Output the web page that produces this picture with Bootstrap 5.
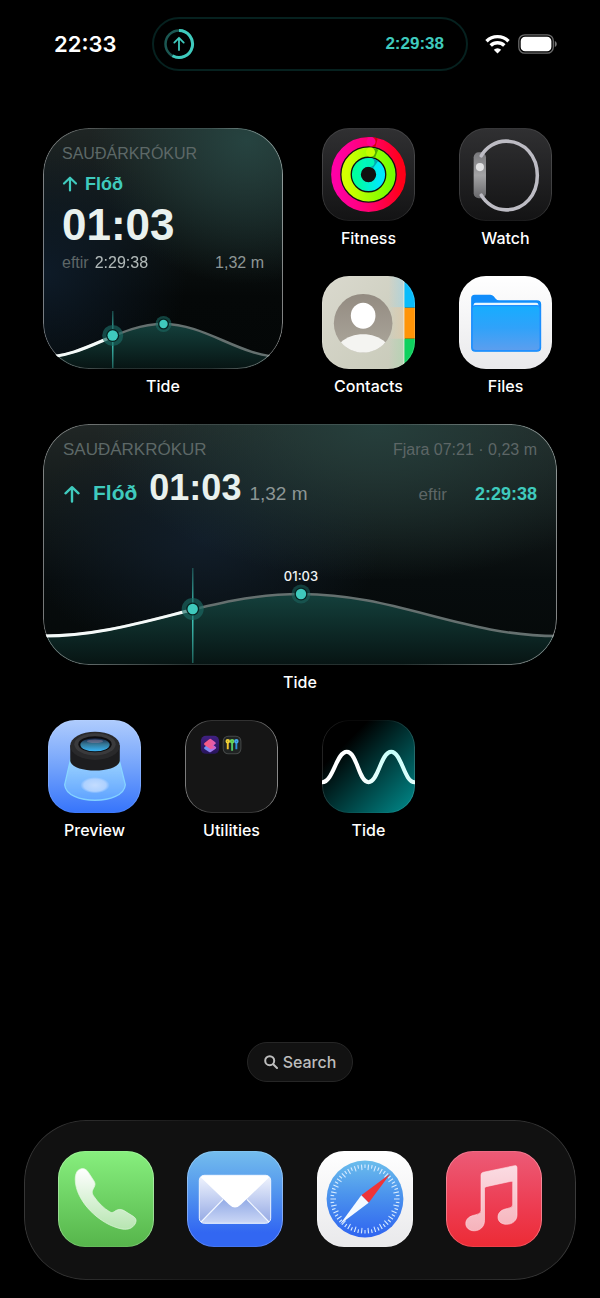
<!DOCTYPE html>
<html lang="is">
<head>
<meta charset="utf-8">
<meta name="viewport" content="width=device-width, initial-scale=1">
<title>Home Screen</title>
<link rel="stylesheet" href="https://cdn.jsdelivr.net/npm/bootstrap@5.3.0/dist/css/bootstrap.min.css">
<style>
  :root { --teal: #3fcabd; --ui: Inter, "Liberation Sans", sans-serif; --face: "Liberation Sans", Arial, sans-serif; }
  body { background: #000; color: #fff; font-family: var(--ui); }
  a { color: inherit; text-decoration: none; }
  svg { display: block; }

  .status { display: grid; grid-template-columns: 152fr 316fr 132fr; align-items: center; padding-top: 17px; }
  .clock { font-size: 22px; font-weight: 600; line-height: 28px; padding-left: 54px; }
  .island { height: 54px; border: 2px solid #06211f; border-radius: 27px; padding: 0 22px 0 9px; }
  .island time { font: 700 17px/20px var(--face); color: var(--teal); }
  .signals { gap: 8px; padding-left: 17px; }

  .springboard { display: grid; grid-template-columns: repeat(4, 1fr); grid-auto-rows: 148px; padding: 57px 26px 0; }
  .wide { grid-column: span 2; grid-row: span 2; }
  .full { grid-column: span 4; grid-row: span 2; }
  .app-label { font-size: 16px; font-weight: 500; line-height: 20px; margin-top: 7px; }
  .tile svg { width: 93px; height: 93px; border-radius: 27px; }
  .rim { position: relative; }
  .rim::after { content: ""; position: absolute; inset: 0; border-radius: inherit; padding: 1px; pointer-events: none;
    background: linear-gradient(90deg, rgba(255,255,255,.45), rgba(255,255,255,.12) 30%, rgba(255,255,255,.12) 70%, rgba(255,255,255,.5));
    -webkit-mask: linear-gradient(#000 0 0) content-box, linear-gradient(#000 0 0); -webkit-mask-composite: xor; mask-composite: exclude; }
  .tile .rim { border-radius: 27px; }
  .soft::after { opacity: .3; }

  .widget { margin: 0 17px; height: 241px; border-radius: 46px; overflow: hidden; font-family: var(--face); align-self: stretch; }
  .widget.small-face { background:
    radial-gradient(ellipse 65% 60% at 85% 5%, #264340, rgba(26,48,46,0)),
    radial-gradient(ellipse 60% 55% at 0 60%, #0e1b28, rgba(14,27,40,0)),
    linear-gradient(#1f2524, #101717 35%, #050808 70%, #040707); }
  .widget.large-face { background:
    radial-gradient(ellipse 55% 65% at 65% 0, #263f3c, rgba(26,46,44,0)),
    radial-gradient(ellipse 35% 50% at 31% 48%, #111d29, rgba(14,25,36,0)),
    linear-gradient(#202625, #121919 35%, #070c0d 65%, #050909); }
  .widget svg.tide { width: 100%; height: auto; margin-top: auto; }
  .s-body { padding: 16px 19px 0; }
  .s-body .phase { gap: 7px; margin-top: 10px; }
  .s-body .until { gap: 6px; }
  .l-body { padding: 16px 20px 0; }
  .place { color: #5d6867; line-height: 20px; }
  .teal { color: var(--teal); }
  .ink { color: #e9f1ee; }
  .mute { color: #5d6666; }
  .mid { color: #8d9695; }
  .t16 { font-size: 16px; line-height: 20px; }
  .t17 { font-size: 17px; line-height: 20px; }
  .t18 { font-size: 18px; line-height: 20px; }
  .t19 { font-size: 19px; line-height: 20px; }
  .t21 { font-size: 21px; line-height: 20px; }
  .hour-s { font-size: 44px; line-height: 44px; margin: 9px 0 6px; }
  .hour-l { font-size: 36px; line-height: 40px; }

  .finder { width: 106px; height: 40px; border: 1px solid #262626; border-radius: 20px; background: #121212; color: #bdbdbd; font-size: 16px; font-weight: 500; gap: 5px; margin: 0 auto 38px; }
  .dock { display: grid; grid-template-columns: repeat(4, 1fr); justify-items: center; margin: 0 24px 18px; padding: 31px 17px 33px; background: #111; border-radius: 62px; }
  .dock::after { opacity: .35; }
  .dock svg { width: 96px; height: 96px; border-radius: 27px; }
  .dock a { border-radius: 27px; }
  .dock a::after { opacity: .7; }
</style>
</head>
<body>
<div class="min-vh-100 d-flex flex-column">

  <header class="status">
    <time class="clock">22:33</time>
    <div class="island d-flex align-items-center justify-content-between">
      <svg width="32" height="32" viewBox="0 0 32 32" fill="none" stroke="#3fcabd">
        <circle cx="16" cy="16" r="13.5" stroke="#1b5752" stroke-width="2.5"/>
        <path d="M16 2.500A13.500 13.500 0 1 1 9.500 27.800" stroke-width="3"/>
        <path d="M16 22V10M11.300 14.600L16 9.800l4.700 4.800" stroke-width="1.800" stroke-linecap="round" stroke-linejoin="round"/>
      </svg>
      <time>2:29:38</time>
    </div>
    <div class="signals d-flex align-items-center">
      <svg width="25" height="20" viewBox="0 0 25 20" fill="none" stroke="#fff" stroke-width="3.400">
        <path d="M1.500 7.200a15.600 15.600 0 0 1 22 0"/><path d="M5.700 11.500a9.600 9.600 0 0 1 13.600 0"/>
        <path d="M12.500 19.500L8.800 15.700a5.300 5.300 0 0 1 7.400 0z" fill="#fff" stroke="none"/>
      </svg>
      <svg width="40" height="20" viewBox="0 0 40 20">
        <rect x=".8" y=".8" width="34.500" height="18.400" rx="6" fill="none" stroke="#6b6b6b" stroke-width="1.300"/>
        <rect x="2.700" y="2.700" width="30.700" height="14.600" rx="4.400" fill="#fff"/>
        <path d="M36.800 7v6c2.600-1 2.600-5 0-6z" fill="#777"/>
      </svg>
    </div>
  </header>

  <main class="springboard">
    <a href="#tide" class="wide d-flex flex-column align-items-center">
      <div class="widget small-face rim d-flex flex-column">
        <div class="s-body">
          <div class="place t16">SAUÐÁRKRÓKUR</div>
          <div class="phase teal t18 fw-bold d-flex align-items-center">
            <svg width="16" height="16" viewBox="0 0 16 16" fill="none" stroke="currentColor" stroke-width="2.200" stroke-linecap="round" stroke-linejoin="round"><path d="M8 14.500V2M2 7.500L8 1.700l6 5.800"/></svg>
            Flóð
          </div>
          <div class="ink hour-s fw-bold">01:03</div>
          <div class="until t16 d-flex"><span class="mute">eftir</span><span class="ink opacity-75">2:29:38</span><span class="mid ms-auto">1,32 m</span></div>
        </div>
        <svg class="tide" viewBox="0 0 240 60">
          <defs>
            <linearGradient id="sea" x1="0" y1="0" x2="0" y2="1"><stop stop-color="#14403c"/><stop offset="1" stop-color="#071413"/></linearGradient>
            <linearGradient id="now" x1="0" y1="0" x2="0" y2="1"><stop stop-color="#3fcabd" stop-opacity=".3"/><stop offset=".5" stop-color="#3fcabd"/><stop offset="1" stop-color="#3fcabd" stop-opacity=".4"/></linearGradient>
            <clipPath id="past"><path d="M0 0h70v60H0z"/></clipPath>
          </defs>
          <path d="M0 48C44 48 76 15 120 15S196 48 240 48V60H0z" fill="url(#sea)"/>
          <path d="M0 48C44 48 76 15 120 15S196 48 240 48" fill="none" stroke="#65706f" stroke-width="2.500"/>
          <path d="M0 48C44 48 76 15 120 15" clip-path="url(#past)" fill="none" stroke="#f5faf9" stroke-width="3"/>
          <path d="M69 2h1.500v57H69z" fill="url(#now)"/>
          <circle cx="69.700" cy="26.500" r="10.500" fill="#1c6a64" opacity=".65"/><circle cx="69.700" cy="26.500" r="6.500" fill="#062320"/><circle cx="69.700" cy="26.500" r="5.200" fill="#3fcabd"/>
          <circle cx="120.500" cy="15" r="8" fill="#1c6a64" opacity=".6"/><circle cx="120.500" cy="15" r="5.500" fill="#062320"/><circle cx="120.500" cy="15" r="4.200" fill="#3fcabd"/>
        </svg>
      </div>
      <span class="app-label">Tide</span>
    </a>

    <a href="#fitness" class="tile d-flex flex-column align-items-center">
      <div class="rim soft"><svg viewBox="0 0 92 92" fill="none">
        <defs>
          <linearGradient id="dark" x1="0" y1="0" x2="0" y2="1"><stop stop-color="#303032"/><stop offset="1" stop-color="#131314"/></linearGradient>
          <linearGradient id="r1"><stop stop-color="#ff00a6"/><stop offset=".45" stop-color="#ff0078"/><stop offset="1" stop-color="#ff0018"/></linearGradient>
          <linearGradient id="r2"><stop stop-color="#d5ff00"/><stop offset="1" stop-color="#72ff00"/></linearGradient>
          <linearGradient id="r3"><stop stop-color="#00ff9d"/><stop offset="1" stop-color="#00e8ff"/></linearGradient>
        </defs>
        <path fill="url(#dark)" d="M0 0h92v92H0z"/>
        <circle cx="46" cy="46" r="37" fill="#111"/>
        <circle cx="46" cy="46" r="32.500" stroke="url(#r1)" stroke-width="9"/>
        <path d="M48 13.500a33 33 0 0 1 6 1" stroke="#d8000c" stroke-width="9"/><circle cx="48.500" cy="13.500" r="4.500" fill="#ff0090"/>
        <circle cx="46" cy="46" r="22.200" stroke="url(#r2)" stroke-width="9"/>
        <path d="M48 23.900a22 22 0 0 1 6 1.500" stroke="#50b000" stroke-width="9"/><circle cx="48" cy="23.900" r="4.500" fill="#c4ff00"/>
        <circle cx="46" cy="46" r="12" stroke="url(#r3)" stroke-width="8.800"/>
        <path d="M48 34.200a12 12 0 0 1 5 2" stroke="#00a8b4" stroke-width="8.800"/><circle cx="47.500" cy="34.100" r="4.400" fill="#00f5b8"/>
      </svg></div>
      <span class="app-label">Fitness</span>
    </a>
    <a href="#watch" class="tile d-flex flex-column align-items-center">
      <div class="rim soft"><svg viewBox="0 0 92 92" fill="none">
        <defs><linearGradient id="caseg" x1="0" y1="0" x2="0" y2="1"><stop stop-color="#77777a"/><stop offset=".5" stop-color="#a3a3a5"/><stop offset="1" stop-color="#68686b"/></linearGradient></defs>
        <path fill="url(#dark)" d="M0 0h92v92H0z"/>
        <rect x="14.500" y="24" width="12.200" height="45.500" rx="5" fill="url(#caseg)"/>
        <path d="M22 27.500C27 19 36 13 46.500 13C65 13 77.500 28 77.500 47S65 81 46.500 81C36 81 27 75 22 66.500" stroke="#bdbcc4" stroke-width="3.500" stroke-linecap="round"/>
        <circle cx="20.700" cy="38.700" r="4" fill="#e2e2e3"/>
      </svg></div>
      <span class="app-label">Watch</span>
    </a>
    <a href="#contacts" class="tile d-flex flex-column align-items-center">
      <div class="rim soft"><svg viewBox="0 0 92 92">
        <defs>
          <linearGradient id="paper" x1="0" y1="0" x2="1" y2="1"><stop stop-color="#dad9ce"/><stop offset="1" stop-color="#c8cab9"/></linearGradient>
          <linearGradient id="who" x1="0" y1="0" x2="0" y2="1"><stop stop-color="#938b81"/><stop offset="1" stop-color="#aca79c"/></linearGradient>
          <linearGradient id="tabB"><stop stop-color="#b3d3d8" stop-opacity="0"/><stop offset="1" stop-color="#b3d3d8"/></linearGradient>
          <linearGradient id="tabO"><stop stop-color="#dccbab" stop-opacity="0"/><stop offset="1" stop-color="#dacbb0"/></linearGradient>
          <linearGradient id="tabG"><stop stop-color="#b3d3b4" stop-opacity="0"/><stop offset="1" stop-color="#b8d2b4"/></linearGradient>
        </defs>
        <path fill="url(#paper)" d="M0 0h82v92H0z"/>
        <path d="M66 0h15v31H66z" fill="url(#tabB)"/><path d="M66 31h15v31H66z" fill="url(#tabO)"/><path d="M66 62h15v30H66z" fill="url(#tabG)"/>
        <path d="M81 0h11v31.500H81z" fill="#09bcfb"/><path d="M81 31.500h11V62H81z" fill="#ff9407"/><path d="M81 62h11v30H81z" fill="#0fd15e"/>
        <path d="M80.500 0h1v92h-1z" fill="#ecebdc"/>
        <circle cx="40.700" cy="46.700" r="29" fill="url(#who)"/>
        <ellipse cx="40.700" cy="39.300" rx="12.200" ry="12.800" fill="#fff"/>
        <path d="M18.700 65.500c12-10.400 32-10.400 44 0c-11 13.600-33 13.600-44 0z" fill="#f4f4f1"/>
      </svg></div>
      <span class="app-label">Contacts</span>
    </a>
    <a href="#files" class="tile d-flex flex-column align-items-center">
      <div class="rim soft"><svg viewBox="0 0 92 92">
        <defs>
          <linearGradient id="white" x1="0" y1="0" x2="0" y2="1"><stop stop-color="#fff"/><stop offset="1" stop-color="#e9e9eb"/></linearGradient>
          <linearGradient id="fold" x1="0" y1="0" x2="0" y2="1"><stop stop-color="#16adff"/><stop offset=".5" stop-color="#30a2fa"/><stop offset="1" stop-color="#5c9eee"/></linearGradient>
        </defs>
        <path fill="url(#white)" d="M0 0h92v92H0z"/>
        <path d="M12 22q0-3.500 3.500-3.500H31q2 0 3.300 1.600l2 2.400q1.400 1.500 3.300 1.500H77q4.300 0 4.300 4V71q0 4-4.300 4H16q-4 0-4-4z" fill="#118dfb"/>
        <path d="M14.500 31v-2.500q0-2 2-2h60q2 0 2 2V31z" fill="#e6f6ff"/>
        <rect x="13" y="29.300" width="67.200" height="44.500" rx="3.500" fill="url(#fold)" stroke="#218fff" stroke-width="1.200"/>
      </svg></div>
      <span class="app-label">Files</span>
    </a>

    <a href="#tide-today" class="full d-flex flex-column align-items-center">
      <div class="widget large-face rim d-flex flex-column">
        <div class="l-body">
          <div class="d-flex justify-content-between align-items-center mb-2">
            <span class="place t17">SAUÐÁRKRÓKUR</span><span class="mute t16">Fjara 07:21 · 0,23 m</span>
          </div>
          <div class="d-flex align-items-baseline">
            <svg class="me-2 align-self-end mb-1" width="18" height="18" viewBox="0 0 18 18" fill="none" stroke="#3fcabd" stroke-width="2.400" stroke-linecap="round" stroke-linejoin="round"><path d="M9 15.500V1.500M2.500 7.300L9 1.200l6.500 6.100"/></svg>
            <span class="teal t21 fw-bold ms-1">Flóð</span>
            <span class="ink hour-l fw-bold ms-2 ps-1">01:03</span>
            <span class="mid t19 ms-2">1,32 m</span>
            <span class="mute t17 ms-auto">eftir</span>
            <span class="teal t18 fw-bold ms-4 ps-1">2:29:38</span>
          </div>
        </div>
        <svg class="tide" viewBox="0 0 514 100">
          <path d="M0 71C94 71 163 29 258 29S419 71 514 71V100H0z" fill="url(#sea)"/>
          <path d="M0 71C94 71 163 29 258 29S419 71 514 71" fill="none" stroke="#65706f" stroke-width="2.500"/>
          <clipPath id="pastL"><path d="M0 0h150v100H0z"/></clipPath>
          <path d="M0 71C94 71 163 29 258 29" clip-path="url(#pastL)" fill="none" stroke="#f5faf9" stroke-width="3"/>
          <path d="M149 3h1.500v95H149z" fill="url(#now)"/>
          <circle cx="149.700" cy="44" r="11" fill="#1c6a64" opacity=".65"/><circle cx="149.700" cy="44" r="6.500" fill="#062320"/><circle cx="149.700" cy="44" r="5.200" fill="#3fcabd"/>
          <circle cx="258" cy="29" r="9.500" fill="#1c6a64" opacity=".5"/><circle cx="258" cy="29" r="6.500" fill="#062320"/><circle cx="258" cy="29" r="5.200" fill="#3fcabd"/>
          <text x="258" y="16" text-anchor="middle" font-family="Inter, sans-serif" font-size="13" font-weight="500" fill="#f2f5f4">01:03</text>
        </svg>
      </div>
      <span class="app-label">Tide</span>
    </a>

    <a href="#preview" class="tile d-flex flex-column align-items-center">
      <div class="rim soft"><svg viewBox="0 0 92 92">
        <defs>
          <linearGradient id="sky" x1="0" y1="0" x2="0" y2="1"><stop stop-color="#afccfd"/><stop offset=".5" stop-color="#73a3fb"/><stop offset="1" stop-color="#3674fb"/></linearGradient>
          <linearGradient id="cone" x1="0" y1="0" x2="0" y2="1"><stop stop-color="#a3dcff"/><stop offset="1" stop-color="#65aaff"/></linearGradient>
          <linearGradient id="glass" x1="0" y1="0" x2="0" y2="1"><stop stop-color="#162344"/><stop offset=".45" stop-color="#347695"/><stop offset="1" stop-color="#39b4f5"/></linearGradient>
          <radialGradient id="spot"><stop stop-color="#c3dcff"/><stop offset=".75" stop-color="#aed1ff"/><stop offset="1" stop-color="#aed1ff" stop-opacity="0"/></radialGradient>
        </defs>
        <path fill="url(#sky)" d="M0 0h92v92H0z"/>
        <path d="M22.500 38L16.500 64C18 84.500 75 84.500 76.500 64L70 38z" fill="url(#cone)" opacity=".85" stroke="#8fe0ff" stroke-width="1.300"/>
        <ellipse cx="46.500" cy="64.500" rx="14.500" ry="8" fill="url(#spot)"/>
        <path d="M22 25v15.500c2 12.700 47 12.700 49 0V25z" fill="#1d1d1f"/>
        <ellipse cx="46.500" cy="25.500" rx="24.500" ry="14" fill="#29292b"/>
        <ellipse cx="46.500" cy="24" rx="20.500" ry="11" fill="#3a3a3c"/>
        <ellipse cx="46.500" cy="24" rx="16.500" ry="8" fill="#0d0d10"/>
        <ellipse cx="46.500" cy="24.500" rx="14.500" ry="6.500" fill="url(#glass)"/>
        <ellipse cx="46.500" cy="21" rx="8" ry="1.700" fill="#a98aa5" opacity=".4"/>
      </svg></div>
      <span class="app-label">Preview</span>
    </a>
    <a href="#utilities" class="tile d-flex flex-column align-items-center">
      <div class="rim"><svg viewBox="0 0 92 92">
        <defs>
          <linearGradient id="pur" x1="0" y1="0" x2="0" y2="1"><stop stop-color="#402080"/><stop offset="1" stop-color="#28145c"/></linearGradient>
          <linearGradient id="pk"><stop stop-color="#ff5c78"/><stop offset="1" stop-color="#dc5bb8"/></linearGradient>
          <linearGradient id="bl"><stop stop-color="#639bf8"/><stop offset="1" stop-color="#c164e0"/></linearGradient>
        </defs>
        <path fill="#151515" d="M0 0h92v92H0z"/>
        <rect x="15.700" y="15.500" width="18" height="18" rx="5" fill="url(#pur)"/>
        <path d="M24.500 22L30.300 26.500Q31.500 27.500 30.300 28.500L25.600 31.700Q24.700 32.200 23.800 31.700L19.300 28.700Q18.300 27.800 19.300 27z" fill="url(#bl)"/>
        <path d="M19.300 22.800L24 19Q25 18.300 26 19L30 22Q31 23 30 23.800L27.500 25.500L30 27.500L25.500 29L19.300 24.800Q18.300 23.800 19.300 22.800z" fill="url(#pk)"/>
        <rect x="37.800" y="16" width="17.500" height="17.500" rx="5" fill="#202323" stroke="#454848"/>
        <g fill="none" stroke-width="1.900"><path d="M42.300 22v7" stroke="#f3c62e"/><circle cx="42.300" cy="21" r="1.300" stroke="#f0d337"/><path d="M46.600 22v8.500" stroke="#54c865"/><circle cx="46.600" cy="21" r="1.300" stroke="#6cd658"/><path d="M50.800 22v7" stroke="#2b91de"/><circle cx="50.800" cy="21" r="1.300" stroke="#45a8f0"/></g>
      </svg></div>
      <span class="app-label">Utilities</span>
    </a>
    <a href="#tide-app" class="tile d-flex flex-column align-items-center">
      <div class="rim soft"><svg viewBox="0 0 92 92">
        <defs>
          <linearGradient id="deep" x1="0" y1="0" x2="1" y2="1"><stop offset=".25" stop-color="#000"/><stop offset=".9" stop-color="#007a7b"/></linearGradient>
          <linearGradient id="foam"><stop offset=".4" stop-color="#fff"/><stop offset=".75" stop-color="#c4fffa"/><stop offset="1" stop-color="#e4fffc"/></linearGradient>
        </defs>
        <path fill="url(#deep)" d="M0 0h92v92H0z"/>
        <path d="M0 61.500C11 62 14 31.500 24.500 31.500S36 61.500 46 61.500S58 31.500 68.500 31.500S81 62 92 61.500" fill="none" stroke="url(#foam)" stroke-width="4"/>
      </svg></div>
      <span class="app-label">Tide</span>
    </a>
  </main>

  <div class="mt-auto">
    <button type="button" class="finder d-flex align-items-center justify-content-center p-0">
      <svg width="14" height="14" viewBox="0 0 14 14" fill="none" stroke="currentColor" stroke-width="2" stroke-linecap="round"><circle cx="5.700" cy="5.700" r="4.500"/><path d="M9.200 9.200L13 13"/></svg>
      Search
    </button>
    <nav class="dock rim" aria-label="Dock">
      <a href="#phone" class="rim" aria-label="Phone"><svg viewBox="0 0 96 96">
        <defs>
          <linearGradient id="grn" x1="0" y1="0" x2="0" y2="1"><stop stop-color="#87ef7e"/><stop offset="1" stop-color="#56b54b"/></linearGradient>
          <linearGradient id="hand" x1="0" y1="0" x2="0" y2="1"><stop stop-color="#fff"/><stop offset="1" stop-color="#b7e5b1"/></linearGradient>
        </defs>
        <path fill="url(#grn)" d="M0 0h96v96H0z"/>
        <path d="M22.500 18C26 16.800 28.500 18.500 30.500 21.500L36 30C37.500 32.500 37.300 34 36 36.500C33.500 40.500 34 42.500 36 45.500C40 51.500 46 57.500 52 61C54 62.200 55.500 61.300 58 59.500C60.700 58 63.200 58 66 59.600L75.500 65.500C78.500 67.700 78.700 70 77 73C74.500 77.300 70 79 64 78C42 74 17 50 17.200 28C17.400 22.500 19 19 22.500 18z" fill="url(#hand)" stroke="#e3f8df" stroke-width=".7"/>
      </svg></a>
      <a href="#mail" class="rim" aria-label="Mail"><svg viewBox="0 0 96 96">
        <defs>
          <linearGradient id="blu" x1="0" y1="0" x2="0" y2="1"><stop stop-color="#74bded"/><stop offset=".4" stop-color="#5498ee"/><stop offset=".85" stop-color="#3267f2"/></linearGradient>
          <linearGradient id="env" x1="0" y1="0" x2="0" y2="1"><stop stop-color="#f1f5fe"/><stop offset="1" stop-color="#93a8e4"/></linearGradient>
          <linearGradient id="env2" x1="0" y1="0" x2="0" y2="1"><stop stop-color="#93abe6"/><stop offset="1" stop-color="#cbd7f6"/></linearGradient>
        </defs>
        <path fill="url(#blu)" d="M0 0h96v96H0z"/>
        <rect x="12.300" y="24.300" width="71.400" height="48" rx="5" fill="url(#env)"/>
        <path d="M14 71L36 48.500H60L82 71Q80 72.300 78 72.300H18Q16 72.300 14 71z" fill="url(#env2)"/>
        <path d="M14 71L36 48.500M82 71L60 48.500" stroke="#f2f7ff" stroke-width="1.100"/>
        <path d="M13.500 26Q15 24.300 18 24.300H78Q81 24.300 82.500 26L54 53.500Q48 59.500 42 53.500z" fill="#fff"/>
        <rect x="12.300" y="24.300" width="71.400" height="48" rx="5" fill="none" stroke="#edf4ff"/>
      </svg></a>
      <a href="#safari" class="rim" aria-label="Safari"><svg viewBox="0 0 96 96">
        <defs><linearGradient id="saf" x1="0" y1="0" x2="0" y2="1"><stop stop-color="#6bbdec"/><stop offset=".45" stop-color="#4b93ed"/><stop offset="1" stop-color="#2f64f0"/></linearGradient></defs>
        <path fill="url(#white)" d="M0 0h96v96H0z"/>
        <circle cx="48" cy="48" r="38.400" fill="url(#saf)"/>
        <g fill="none" stroke="#d5eaff"><circle cx="48" cy="48" r="31.800" stroke-width="5.600" pathLength="360" stroke-dasharray="2 10" stroke-dashoffset="1"/>
        <circle cx="48" cy="48" r="32.800" stroke-width="3.600" pathLength="360" stroke-dasharray="2 10" stroke-dashoffset="7"/></g>
        <path d="M73.300 22.800L44.300 44.300L51.700 51.700z" fill="#ee3438"/>
        <path d="M23 73.200L44.300 44.300L51.700 51.700z" fill="#f5faff"/>
      </svg></a>
      <a href="#music" class="rim" aria-label="Music"><svg viewBox="0 0 96 96">
        <defs>
          <linearGradient id="red" x1="0" y1="0" x2="0" y2="1"><stop stop-color="#ec5b77"/><stop offset=".6" stop-color="#ed3b50"/><stop offset="1" stop-color="#ec2b35"/></linearGradient>
          <linearGradient id="note" x1="0" y1="0" x2="0" y2="1"><stop stop-color="#fbdce3"/><stop offset="1" stop-color="#f6b3bb"/></linearGradient>
        </defs>
        <path fill="url(#red)" d="M0 0h96v96H0z"/>
        <path d="M35 24Q35 21.800 37.200 21.300L68.500 14.700Q71 14.200 71 16.500V64C71 69.500 66.500 73.300 60.500 73.300C55.500 73.300 52 70.500 52 66.200C52 61 56 58.500 61.500 57.500Q66.700 56.700 66.700 54V31.500Q66.700 30 65 30.300L40 35.700Q38.500 36 38.500 37.700V69.500C38.500 75.500 34 79.800 28.300 79.800C23.500 79.800 19.800 77 19.800 72.500C19.800 67.500 24 65 29 64Q35 63 35 60z" fill="url(#note)" stroke="#ffdfe4" stroke-width=".6"/>
      </svg></a>
    </nav>
  </div>
</div>
<script src="https://cdn.jsdelivr.net/npm/bootstrap@5.3.0/dist/js/bootstrap.bundle.min.js"></script>
</body>
</html>
